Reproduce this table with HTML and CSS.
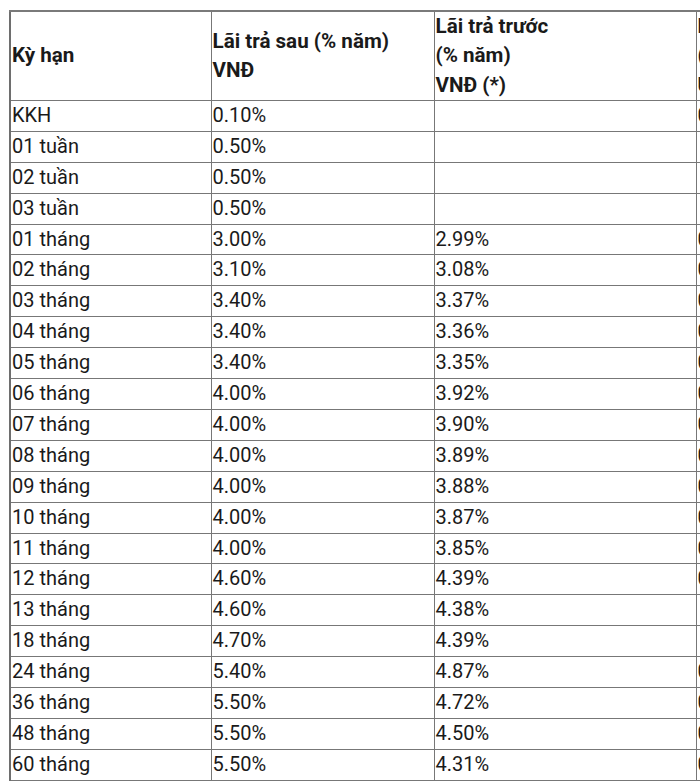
FILE: index.html
```html
<!DOCTYPE html>
<html lang="vi">
<head>
<meta charset="utf-8">
<title>Lãi suất</title>
<link rel="stylesheet" href="styles.css">
</head>
<body>
<div class="wrap">
<table class="rates">
<colgroup>
<col class="c1"><col class="c2"><col class="c3"><col class="c4">
</colgroup>
<thead>
<tr>
<th>Kỳ hạn</th>
<th>Lãi trả sau (% năm)<br>VNĐ</th>
<th>Lãi trả trước<br>(% năm)<br>VNĐ (*)</th>
<th>Lãi trả sau<br>(% năm)<br>USD</th>
</tr>
</thead>
<tbody>
<tr><td>KKH</td><td>0.10%</td><td></td><td>0.00%</td></tr>
<tr><td>01 tuần</td><td>0.50%</td><td></td><td></td></tr>
<tr><td>02 tuần</td><td>0.50%</td><td></td><td></td></tr>
<tr><td>03 tuần</td><td>0.50%</td><td></td><td></td></tr>
<tr><td>01 tháng</td><td>3.00%</td><td>2.99%</td><td>0.00%</td></tr>
<tr><td>02 tháng</td><td>3.10%</td><td>3.08%</td><td>0.00%</td></tr>
<tr><td>03 tháng</td><td>3.40%</td><td>3.37%</td><td>0.00%</td></tr>
<tr><td>04 tháng</td><td>3.40%</td><td>3.36%</td><td>0.00%</td></tr>
<tr><td>05 tháng</td><td>3.40%</td><td>3.35%</td><td>0.00%</td></tr>
<tr><td>06 tháng</td><td>4.00%</td><td>3.92%</td><td>0.00%</td></tr>
<tr><td>07 tháng</td><td>4.00%</td><td>3.90%</td><td>0.00%</td></tr>
<tr><td>08 tháng</td><td>4.00%</td><td>3.89%</td><td>0.00%</td></tr>
<tr><td>09 tháng</td><td>4.00%</td><td>3.88%</td><td>0.00%</td></tr>
<tr><td>10 tháng</td><td>4.00%</td><td>3.87%</td><td>0.00%</td></tr>
<tr><td>11 tháng</td><td>4.00%</td><td>3.85%</td><td>0.00%</td></tr>
<tr><td>12 tháng</td><td>4.60%</td><td>4.39%</td><td>0.00%</td></tr>
<tr><td>13 tháng</td><td>4.60%</td><td>4.38%</td><td></td></tr>
<tr><td>18 tháng</td><td>4.70%</td><td>4.39%</td><td></td></tr>
<tr><td>24 tháng</td><td>5.40%</td><td>4.87%</td><td>0.00%</td></tr>
<tr><td>36 tháng</td><td>5.50%</td><td>4.72%</td><td>0.00%</td></tr>
<tr><td>48 tháng</td><td>5.50%</td><td>4.50%</td><td>0.00%</td></tr>
<tr><td>60 tháng</td><td>5.50%</td><td>4.31%</td><td>0.00%</td></tr>
</tbody>
</table>
</div>
</body>
</html>
```

FILE: styles.css
```css
html, body {
  margin: 0;
  padding: 0;
  background: #ffffff;
}
.wrap {
  width: 700px;
  height: 784px;
  overflow: hidden;
  padding: 10px 0 0 9px;
  box-sizing: border-box;
}
.rates {
  border-collapse: collapse;
  table-layout: fixed;
  width: 900px;
  font-family: Roboto, "Noto Sans", sans-serif;
  font-size: 20px;
  color: #1a1a1a;
  border-left: 2px solid #6e6e6e;
  border-top: 2px solid #7a7a7a;
}
.c1 { width: 201px; }
.c2 { width: 223px; }
.c3 { width: 262px; }
.c4 { width: 214px; }
.rates th,
.rates td {
  border: 1px solid #777777;
  padding: 0 1px;
  text-align: left;
  vertical-align: middle;
  line-height: 29.9px;
  height: 29.9px;
  white-space: nowrap;
}
.rates th {
  font-weight: 700;
  font-size: 20.6px;
  line-height: 29.3px;
}
```
